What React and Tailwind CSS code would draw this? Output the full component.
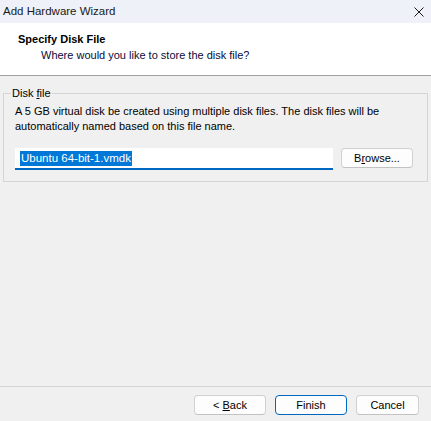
export default function App() {
  const font = { fontFamily: '"Liberation Sans", Arial, sans-serif' }

  return (
    <div
      className="w-[431px] h-[421px] bg-[#f0f0f0] text-[11px] text-black flex flex-col overflow-hidden"
      style={font}
    >
      {/* Title bar */}
      <div className="h-[23px] bg-[#eef1f7] flex items-center justify-between pl-[3px] pr-[6px] shrink-0">
        <span className="text-[11.5px] text-[#1a1a1a]">Add Hardware Wizard</span>
        <svg width="10" height="10" viewBox="0 0 10 10" className="mr-[1px]">
          <path d="M0.5 0.5L9.5 9.5M9.5 0.5L0.5 9.5" stroke="#1a1a1a" strokeWidth="1" />
        </svg>
      </div>

      {/* Header */}
      <div className="h-[53px] bg-white border-b border-[#a0a0a0] pt-[9px] pl-[18px] shrink-0">
        <div className="font-bold leading-[15px]">Specify Disk File</div>
        <div className="pl-[23px] leading-[15px] mt-[1px] text-[#0a0a3a]">
          Where would you like to store the disk file?
        </div>
      </div>

      {/* Body */}
      <div className="px-[3px] pt-[10px] shrink-0">
        <fieldset className="border border-[#d5d5d5] h-[96px] pl-[11px] pr-[12px]">
          <legend className="px-[1px] -ml-[4px] leading-[14px]">
            Disk <span className="underline">f</span>ile
          </legend>
          <p className="leading-[15px] mt-[4px]">
            A 5 GB virtual disk be created using multiple disk files. The disk files will be
            automatically named based on this file name.
          </p>
          <div className="flex items-center mt-[14px] gap-[8px]">
            <div className="w-[318px] h-[22px] bg-white border-b-2 border-[#0067c0] flex items-center pl-[5px]">
              <span className="bg-[#0078d7] text-white text-[11.5px] leading-[15px] px-[1px]">Ubuntu 64-bit-1.vmdk</span>
            </div>
            <button className="w-[72px] h-[20px] mb-[2px] bg-[#fdfdfd] border border-[#d0d0d0] border-b-[#c2c2c2] rounded-[4px] text-[11px] leading-none">
              B<span className="underline">r</span>owse...
            </button>
          </div>
        </fieldset>
      </div>

      <div className="flex-1" />

      {/* Footer */}
      <div className="border-t border-[#d5d5d5] h-[35px] shrink-0 flex items-start justify-end pt-[8px] pr-[12px] gap-[9px]">
        <button className="w-[72px] h-[20px] bg-[#fdfdfd] border border-[#d0d0d0] border-b-[#c2c2c2] rounded-[4px] text-[11px] leading-none">
          &lt; <span className="underline">B</span>ack
        </button>
        <button className="w-[72px] h-[20px] bg-[#fdfdfd] border border-[#0067c0] rounded-[4px] text-[11px] leading-none">
          Finish
        </button>
        <button className="w-[63px] h-[20px] bg-[#fdfdfd] border border-[#d0d0d0] border-b-[#c2c2c2] rounded-[4px] text-[11px] leading-none">
          Cancel
        </button>
      </div>
    </div>
  )
}
